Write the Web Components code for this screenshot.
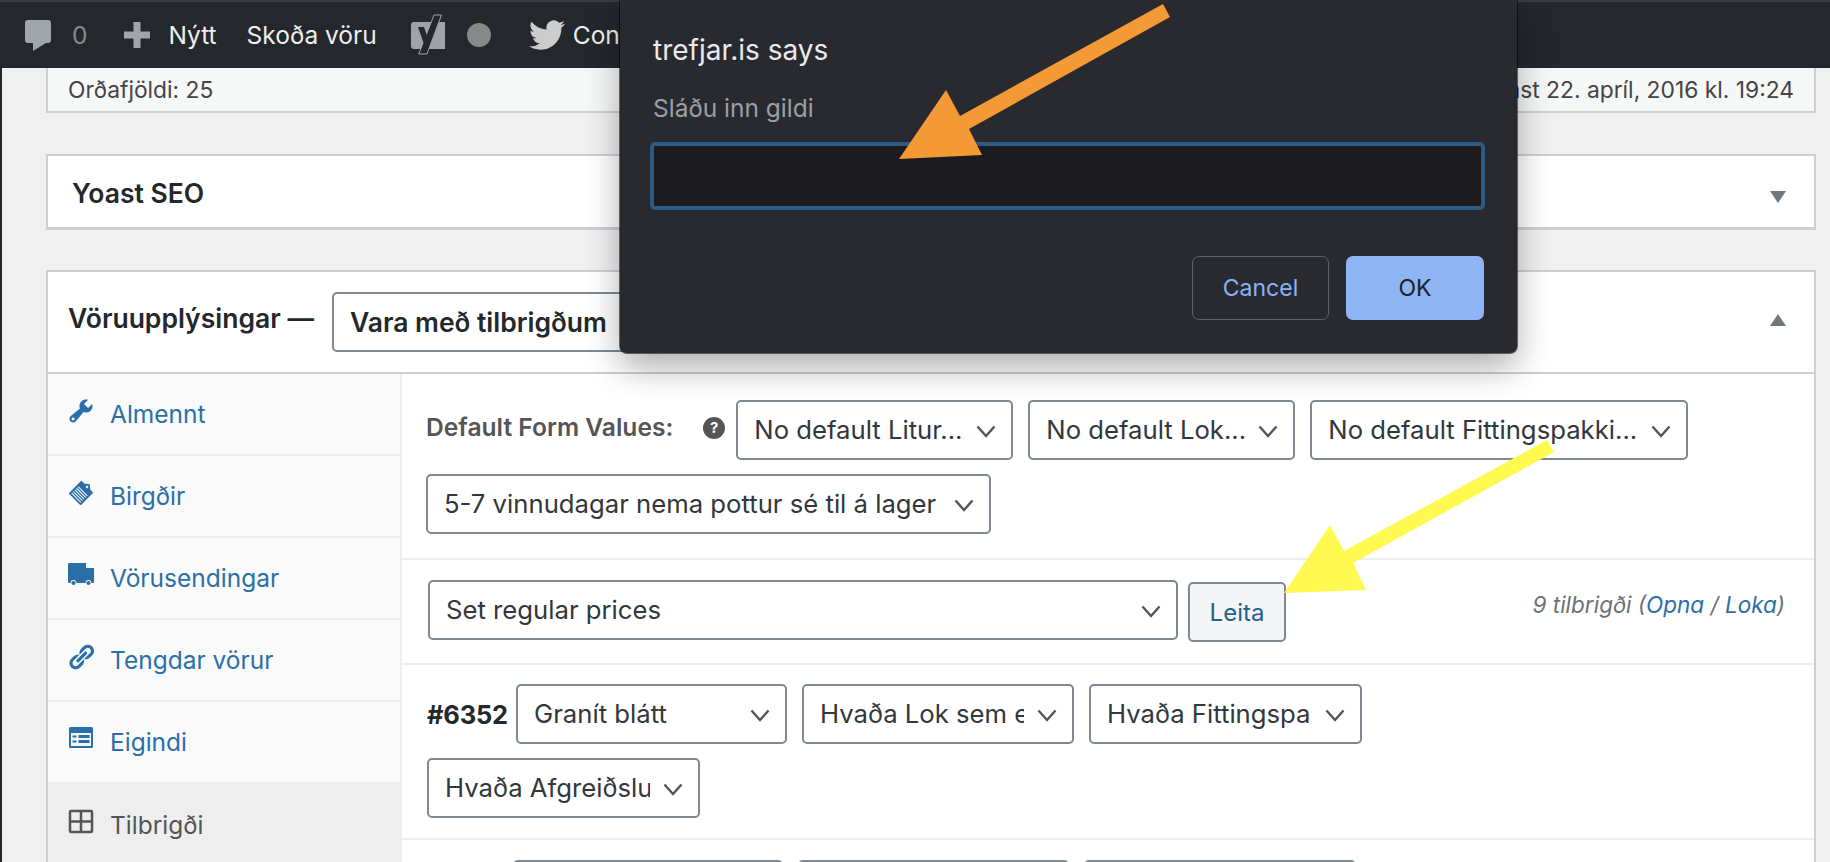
<!DOCTYPE html>
<html lang="is">
<head>
<meta charset="utf-8">
<title>Vara</title>
<style>
  html, body { margin: 0; height: 862px; overflow: hidden; background: #f0f0f1; }
  body { font-family: Inter, "Noto Sans", sans-serif; color: #23282d; }
</style>
</head>
<body>
<wp-admin-bar></wp-admin-bar>

<wp-page>
  <wp-status-box>
    <span>Orðafjöldi: 25</span>
    <span>síðast 22. apríl, 2016 kl. 19:24</span>
  </wp-status-box>

  <wp-postbox heading="Yoast SEO" closed></wp-postbox>

  <wp-postbox heading="Vöruupplýsingar —" tall>
    <wp-select slot="header" width="330" strong>Vara með tilbrigðum</wp-select>
    <wp-product-tabs slot="body"></wp-product-tabs>
  </wp-postbox>
</wp-page>

<js-prompt site="trefjar.is" message="Sláðu inn gildi"></js-prompt>
<note-arrow color="#f39a36" points="899,159 946,90 960,116 1163,4 1170,17 969,129 982,155"></note-arrow>
<note-arrow color="#fff950" points="1284,593 1330,525 1344,551 1547,440 1554,452 1353,563 1366,590"></note-arrow>

<script>
const BLUE = '#2b6fa8';

class WpAdminBar extends HTMLElement {
  constructor() {
    super();
    const shadow = this.attachShadow({ mode: 'open' });
    shadow.innerHTML = `
    <style>
      :host {
        display: flex;
        align-items: center;
        box-sizing: border-box;
        height: 68px;
        border-top: 2px solid #3b3c3e;
        background: #24282d;
        color: #eeeeee;
        font-size: 24.5px;
        overflow: hidden;
      }
      svg { display: block; flex: none; }
      span { white-space: nowrap; }
      .count { color: #85898d; margin-left: 21px; }
    </style>
    <svg style="margin-left:25px" width="26" height="31" viewBox="0 0 26 31"><path fill="#a0a5aa" d="M3 0h20a3 3 0 0 1 3 3v17a3 3 0 0 1-3 3H21L8 31V23H3a3 3 0 0 1-3-3V3a3 3 0 0 1 3-3z"/></svg>
    <span class="count">0</span>
    <svg style="margin-left:37px" width="26" height="26" viewBox="0 0 26 26"><path fill="#a0a5aa" d="M9.5 0h7v9.5H26v7h-9.5V26h-7v-9.5H0v-7h9.500z"/></svg>
    <span style="margin-left:18px">Nýtt</span>
    <span style="margin-left:30px">Skoða vöru</span>
    <svg style="margin-left:33px" width="36" height="42" viewBox="0 0 36 42">
      <path fill="#9ea3a8" d="M4 8h31v27H4a3 3 0 0 1-3-3V11a3 3 0 0 1 3-3z"/>
      <path fill="#24282d" stroke="#9ea3a8" stroke-width="1" d="M24 1h7.5L17 40H8.7l3.8-9.5z"/>
      <path fill="#24282d" d="M8 13h6l5.500 16-4.500 4z"/>
    </svg>
    <svg style="margin-left:21px" width="24" height="24" viewBox="0 0 24 24"><circle cx="12" cy="12" r="12" fill="#888888"/></svg>
    <svg style="margin-left:38px" width="36" height="36" viewBox="0 0 24 24"><path fill="#cccccc" d="M23.953 4.57a10 10 0 01-2.825.775 4.958 4.958 0 002.163-2.723c-.951.555-2.005.959-3.127 1.184a4.92 4.92 0 00-8.384 4.482C7.69 8.095 4.067 6.13 1.64 3.162a4.822 4.822 0 00-.666 2.475c0 1.71.87 3.213 2.188 4.096a4.904 4.904 0 01-2.228-.616v.06a4.923 4.923 0 003.946 4.827 4.996 4.996 0 01-2.212.085 4.936 4.936 0 004.604 3.417 9.867 9.867 0 01-6.102 2.105c-.39 0-.779-.023-1.17-.067a13.995 13.995 0 007.557 2.209c9.053 0 13.998-7.496 13.998-13.985 0-.21 0-.42-.015-.63A9.935 9.935 0 0024 4.59z"/></svg>
    <span style="margin-left:8px">Con</span>
`;
  }
}

class WpPage extends HTMLElement {
  constructor() {
    super();
    const shadow = this.attachShadow({ mode: 'open' });
    shadow.innerHTML = `
    <style>
      :host {
        display: block;
        box-sizing: border-box;
        width: 1816px;
        height: 794px;
        border-left: 2px solid #24282d;
        padding-left: 44px;
        overflow: hidden;
      }
    </style>
    <slot></slot>
`;
  }
}

class WpStatusBox extends HTMLElement {
  constructor() {
    super();
    const shadow = this.attachShadow({ mode: 'open' });
    shadow.innerHTML = `
    <style>
      :host {
        display: flex;
        justify-content: space-between;
        align-items: center;
        box-sizing: border-box;
        height: 45px;
        padding: 0 20px;
        border: 2px solid #ccd0d4;
        border-top: none;
        background: #f6f7f7;
        color: #444444;
        font-size: 22.8px;
      }
    </style>
    <slot></slot>
`;
  }
}

class WpPostbox extends HTMLElement {
  constructor() {
    super();
    const shadow = this.attachShadow({ mode: 'open' });
    const closed = this.hasAttribute('closed');
    shadow.innerHTML = `
    <style>
      :host {
        display: block;
        margin-top: ${closed ? 41 : 40}px;
        border: 2px solid #ccd0d4;
        ${closed ? 'border-bottom-width: 3px;' : ''}
        background: #ffffff;
      }
      .head {
        display: flex;
        align-items: center;
        position: relative;
        box-sizing: border-box;
        height: ${closed ? 71 : 100}px;
        padding-left: ${closed ? 24 : 20}px;
        gap: 18px;
      }
      h2 {
        margin: ${closed ? '2px' : '-8px'} 0 0 0;
        font-size: 26.5px;
        font-weight: 600;
        white-space: nowrap;
      }
      .toggle {
        position: absolute;
        right: 28px;
        top: ${closed ? 35 : 42}px;
        width: 0;
        height: 0;
        border-left: 8px solid transparent;
        border-right: 8px solid transparent;
        ${closed ? 'border-top: 12px solid #72777c;' : 'border-bottom: 12px solid #72777c;'}
      }
      .body { ${closed ? 'display: none;' : 'border-top: 2px solid #ccd0d4;'} }
    </style>
    <div class="head">
      <h2>${this.getAttribute('heading')}</h2>
      <slot name="header"></slot>
      <span class="toggle"></span>
    </div>
    <div class="body"><slot name="body"></slot></div>
`;
  }
}

class WpSelect extends HTMLElement {
  constructor() {
    super();
    const shadow = this.attachShadow({ mode: 'open' });
    const width = this.getAttribute('width');
    const strong = this.hasAttribute('strong');
    shadow.innerHTML = `
    <style>
      :host {
        display: block;
        flex: none;
        position: relative;
        box-sizing: border-box;
        width: ${width}px;
        height: 60px;
        border: 2px solid #7e8993;
        border-radius: 5px;
        background: #ffffff;
        color: ${strong ? '#23282d' : '#32373c'};
        font-size: ${strong ? 26.5 : 25.7}px;
        font-weight: ${strong ? 600 : 400};
        line-height: 56px;
      }
      .text {
        display: block;
        height: 56px;
        margin: 0 48px 0 16px;
        overflow: hidden;
        white-space: nowrap;
      }
      svg { position: absolute; right: 15px; top: 23px; }
    </style>
    <span class="text"><slot></slot></span>
    <svg width="20" height="13" viewBox="0 0 20 13"><path d="M1.5 1.5L10 11l8.5-9.5" fill="none" stroke="#555555" stroke-width="2.4"/></svg>
`;
  }
}

class WpTabLink extends HTMLElement {
  constructor() {
    super();
    const shadow = this.attachShadow({ mode: 'open' });
    const active = this.hasAttribute('active');
    shadow.innerHTML = `
    <style>
      :host {
        display: flex;
        align-items: center;
        box-sizing: border-box;
        height: 82px;
        margin-right: ${active ? -2 : 0}px;
        padding-left: 20px;
        gap: 16px;
        border-bottom: ${active ? 0 : 2}px solid #eeeeee;
        background: ${active ? '#eeeeee' : 'transparent'};
        color: ${active ? '#555555' : BLUE};
        font-size: 24.5px;
      }
      .icon { display: block; width: 26px; height: 26px; margin-top: -6px; }
      ::slotted(svg) { display: block; }
    </style>
    <span class="icon"><slot name="icon"></slot></span>
    <span><slot></slot></span>
`;
  }
}

class WpProductTabs extends HTMLElement {
  constructor() {
    super();
    const shadow = this.attachShadow({ mode: 'open' });
    shadow.innerHTML = `
    <style>
      :host { display: flex; height: 490px; }
      nav {
        flex: none;
        width: 352px;
        background: #fafafa;
        border-right: 2px solid #eeeeee;
      }
      main { flex: 1; min-width: 0; }
    </style>
    <nav>
      <wp-tab-link>
        <svg slot="icon" width="26" height="26" viewBox="1 1 18 18"><path fill="${BLUE}" d="M16.68 9.77c-1.34 1.34-3.3 1.67-4.95.99l-5.41 6.52c-.99.99-2.59.99-3.58 0s-.99-2.59 0-3.57l6.52-5.42c-.68-1.65-.35-3.61.99-4.95 1.28-1.28 3.12-1.62 4.72-1.06l-2.89 2.89 2.82 2.82 2.86-2.87c.53 1.58.18 3.39-1.08 4.65zM3.81 16.21c.4.39 1.04.39 1.43 0 .4-.4.4-1.04 0-1.43-.39-.4-1.03-.4-1.43 0-.39.39-.39 1.03 0 1.43z"/></svg>
        Almennt
      </wp-tab-link>
      <wp-tab-link>
        <svg slot="icon" width="26" height="26" viewBox="0 0 26 26">
          <g transform="rotate(45 13 13)">
            <rect x="4.5" y="4" width="17" height="18" rx="1" fill="${BLUE}"/>
            <path d="M6.5 10.5h13M6.5 12.8h13M6.5 15.1h13M6.5 17.4h13M6.5 19.7h13" stroke="#e8f0f6" stroke-width="1.1"/>
            <path d="M9 4l4-3.5 4 3.5v3H9z" fill="${BLUE}"/>
            <circle cx="13" cy="4.5" r="1.3" fill="#e8f0f6"/>
          </g>
        </svg>
        Birgðir
      </wp-tab-link>
      <wp-tab-link>
        <svg slot="icon" width="26" height="24" viewBox="0 0 26 24">
          <path fill="${BLUE}" d="M1 1h17v5h8v14a1 1 0 0 1-1 1H1a1 1 0 0 1-1-1V2a1 1 0 0 1 1-1z"/>
          <circle cx="5.5" cy="21" r="2.9" fill="#fafafa"/><circle cx="5.5" cy="21" r="2.1" fill="${BLUE}"/>
          <circle cx="20.5" cy="21" r="2.9" fill="#fafafa"/><circle cx="20.5" cy="21" r="2.1" fill="${BLUE}"/>
        </svg>
        Vörusendingar
      </wp-tab-link>
      <wp-tab-link>
        <svg slot="icon" width="26" height="26" viewBox="1 1 18 18"><path fill="${BLUE}" d="M17.74 2.76c1.68 1.69 1.68 4.41 0 6.1l-1.53 1.52c-1.12 1.12-2.7 1.47-4.14 1.09l2.62-2.61.76-.77.76-.76c.84-.84.84-2.2 0-3.04-.84-.85-2.2-.85-3.04 0l-.77.76-3.38 3.38c-.37-1.44-.02-3.02 1.1-4.14l1.52-1.53c1.69-1.68 4.42-1.68 6.1 0zM8.59 13.43l5.34-5.34c.42-.42.42-1.1 0-1.52-.44-.43-1.13-.39-1.53 0l-5.33 5.34c-.42.42-.42 1.1 0 1.52.44.43 1.13.39 1.52 0zm-.76 2.29l4.14-4.15c.38 1.44.03 3.02-1.09 4.14l-1.52 1.53c-1.69 1.68-4.41 1.68-6.1 0-1.68-1.68-1.68-4.42 0-6.1l1.53-1.52c1.12-1.12 2.7-1.47 4.14-1.1l-4.14 4.15c-.85.84-.85 2.2 0 3.05.84.84 2.2.84 3.04 0z"/></svg>
        Tengdar vörur
      </wp-tab-link>
      <wp-tab-link>
        <svg slot="icon" width="26" height="24" viewBox="0 0 26 24">
          <rect x="1" y="1" width="24" height="21" rx="1.5" fill="${BLUE}"/>
          <rect x="3" y="7" width="20" height="13" fill="#f2f6f9"/>
          <path d="M4.5 10.5h4M4.5 15.5h4" stroke="${BLUE}" stroke-width="2"/>
          <path d="M10.5 10.5h11M10.5 15.5h11" stroke="${BLUE}" stroke-width="3"/>
        </svg>
        Eigindi
      </wp-tab-link>
      <wp-tab-link active>
        <svg slot="icon" width="26" height="26" viewBox="0 0 26 26">
          <rect x="2" y="2" width="22" height="21" rx="1" fill="none" stroke="#555555" stroke-width="2.5"/>
          <path d="M13 2v21M2 12.5h22" stroke="#555555" stroke-width="2.5"/>
        </svg>
        Tilbrigði
      </wp-tab-link>
    </nav>
    <main>
      <wp-defaults-row></wp-defaults-row>
      <wp-bulk-row></wp-bulk-row>
      <wp-variation-row code="#6352" options="271:Granít blátt,272:Hvaða Lok sem er,273:Hvaða Fittingspakka,273:Hvaða Afgreiðslutíma"></wp-variation-row>
      <wp-variation-row indent="86" options="270:,271:,272:"></wp-variation-row>
    </main>
`;
  }
}

class WpDefaultsRow extends HTMLElement {
  constructor() {
    super();
    const shadow = this.attachShadow({ mode: 'open' });
    shadow.innerHTML = `
    <style>
      :host {
        display: flex;
        flex-wrap: wrap;
        align-items: center;
        gap: 14px 15px;
        padding: 26px 0 24px 24px;
        border-bottom: 2px solid #eeeeee;
      }
      .label { display: flex; align-items: center; margin-top: -6px; }
      strong { color: #555555; font-size: 24.6px; font-weight: 600; white-space: nowrap; }
      .help {
        display: block;
        width: 22px;
        height: 22px;
        margin: 2px -4px 0 30px;
        border-radius: 50%;
        background: #555555;
        color: #ffffff;
        font-size: 15px;
        font-weight: 700;
        line-height: 22px;
        text-align: center;
      }
    </style>
    <span class="label"><strong>Default Form Values:</strong><span class="help">?</span></span>
    <wp-select width="277">No default Litur...</wp-select>
    <wp-select width="267">No default Lok...</wp-select>
    <wp-select width="378">No default Fittingspakki...</wp-select>
    <wp-select width="565">5-7 vinnudagar nema pottur sé til á lager</wp-select>
`;
  }
}

class WpBulkRow extends HTMLElement {
  constructor() {
    super();
    const shadow = this.attachShadow({ mode: 'open' });
    shadow.innerHTML = `
    <style>
      :host {
        display: flex;
        align-items: flex-start;
        height: 105px;
        box-sizing: border-box;
        padding: 20px 29px 0 26px;
        border-bottom: 2px solid #eeeeee;
      }
      button {
        box-sizing: border-box;
        width: 98px;
        height: 60px;
        margin: 2px 0 0 10px;
        border: 2px solid #7e8993;
        border-radius: 5px;
        background: #f3f5f6;
        color: #21618c;
        font: inherit;
        font-size: 24px;
      }
      .count {
        margin: 11px 0 0 auto;
        color: #6d7175;
        font-size: 22.5px;
        font-style: italic;
        white-space: nowrap;
      }
      a { color: ${BLUE}; text-decoration: none; }
    </style>
    <wp-select width="750">Set regular prices</wp-select>
    <button>Leita</button>
    <span class="count">9 tilbrigði (<a href="#">Opna</a> / <a href="#">Loka</a>)</span>
`;
  }
}

class WpVariationRow extends HTMLElement {
  constructor() {
    super();
    const shadow = this.attachShadow({ mode: 'open' });
    const code = this.getAttribute('code');
    const selects = this.getAttribute('options').split(',').map((option) => {
      const [width, text] = option.split(':');
      return `<wp-select width="${width}">${text}</wp-select>`;
    }).join('');
    shadow.innerHTML = `
    <style>
      :host {
        display: block;
        padding: ${code ? 19 : 20}px 0 20px 25px;
        border-bottom: 2px solid #eeeeee;
      }
      div {
        display: flex;
        flex-wrap: wrap;
        align-items: center;
        gap: 14px 15px;
        width: 960px;
      }
      b {
        width: ${code ? 74 : this.getAttribute('indent') - 15}px;
        font-size: 25.5px;
        font-weight: 700;
        letter-spacing: -.2px;
        color: #23282d;
      }
    </style>
    <div>
      <b>${code || ''}</b>
      ${selects}
    </div>
`;
  }
}

class JsPrompt extends HTMLElement {
  constructor() {
    super();
    const shadow = this.attachShadow({ mode: 'open' });
    shadow.innerHTML = `
    <style>
      :host {
        position: absolute;
        left: 620px;
        top: 0;
        box-sizing: border-box;
        width: 897px;
        height: 353px;
        padding: 35px 32px 0 30px;
        background: #292a2f;
        border-radius: 0 0 7px 7px;
        box-shadow: 0 0 0 1px rgba(0, 0, 0, .55), 0 14px 34px rgba(0, 0, 0, .32);
        color: #e8eaed;
      }
      .title { margin-left: 3px; font-size: 28px; line-height: 30px; }
      .message { margin: 28px 0 0 3px; color: #9aa0a6; font-size: 24.5px; line-height: 30px; }
      .field {
        display: block;
        box-sizing: border-box;
        width: 835px;
        height: 68px;
        margin-top: 19px;
        border: 4px solid #2f5a82;
        border-radius: 5px;
        background: #1c1c1e;
        outline: none;
      }
      .actions { display: flex; justify-content: flex-end; gap: 17px; margin: 46px 1px 0 0; }
      button {
        box-sizing: border-box;
        width: 137px;
        height: 64px;
        border: 1px solid #5f6368;
        border-radius: 7px;
        background: transparent;
        color: #8ab4f8;
        font: inherit;
        font-size: 23px;
      }
      button.ok { width: 138px; border: none; background: #8fb4f3; color: #202124; }
    </style>
    <div class="title">${this.getAttribute('site')} says</div>
    <div class="message">${this.getAttribute('message')}</div>
    <input class="field" type="text">
    <div class="actions">
      <button>Cancel</button>
      <button class="ok">OK</button>
    </div>
`;
  }
}

class NoteArrow extends HTMLElement {
  constructor() {
    super();
    const shadow = this.attachShadow({ mode: 'open' });
    shadow.innerHTML = `
    <style>
      :host { position: absolute; left: 0; top: 0; pointer-events: none; }
      svg { display: block; }
    </style>
    <svg width="1830" height="862"><polygon fill="${this.getAttribute('color')}" points="${this.getAttribute('points')}"/></svg>
`;
  }
}

customElements.define('wp-admin-bar', WpAdminBar);
customElements.define('wp-page', WpPage);
customElements.define('wp-status-box', WpStatusBox);
customElements.define('wp-postbox', WpPostbox);
customElements.define('wp-select', WpSelect);
customElements.define('wp-tab-link', WpTabLink);
customElements.define('wp-product-tabs', WpProductTabs);
customElements.define('wp-defaults-row', WpDefaultsRow);
customElements.define('wp-bulk-row', WpBulkRow);
customElements.define('wp-variation-row', WpVariationRow);
customElements.define('js-prompt', JsPrompt);
customElements.define('note-arrow', NoteArrow);
</script>
</body>
</html>
